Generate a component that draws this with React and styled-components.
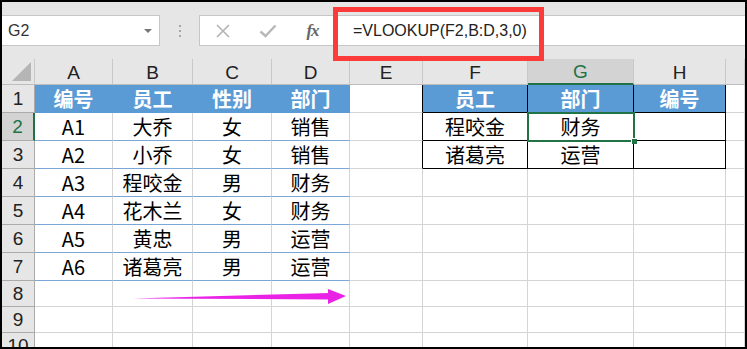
import React from "react";
import styled, { createGlobalStyle, css } from "styled-components";

const GlobalStyle = createGlobalStyle`
  html, body {
    margin: 0;
    padding: 0;
    background: #fff;
  }
`;

const GREEN = "#217346";
const BLUE = "#5b9bd5";
const GRID = "#d4d4d4";
const CJK = `"Noto Sans CJK SC", "Noto Sans", sans-serif`;
const LATIN = `"Liberation Sans", Arial, sans-serif`;

const Frame = styled.div`
  position: relative;
  width: 747px;
  height: 349px;
  box-sizing: border-box;
  border: 2px solid #000;
  background: #e6e6e6;
  overflow: hidden;
  display: flex;
  flex-direction: column;
`;

const Toolbar = styled.div`
  height: 57px;
  flex: none;
  display: flex;
  align-items: center;
`;

const NameBox = styled.div`
  width: 158px;
  height: 31px;
  box-sizing: border-box;
  background: #fff;
  border: 1px solid #c6c6c6;
  border-left: none;
  display: flex;
  align-items: center;
  justify-content: space-between;
  padding: 0 7px 0 6px;
  font: 16px ${LATIN};
  color: #333;
`;

const Caret = styled.span`
  width: 0;
  height: 0;
  border-left: 4px solid transparent;
  border-right: 4px solid transparent;
  border-top: 4px solid #777;
`;

const Grip = styled.div`
  width: 39px;
  display: flex;
  flex-direction: column;
  align-items: center;
  gap: 3px;

  span {
    width: 2px;
    height: 2px;
    background: #a6a6a6;
  }
`;

const FormulaBox = styled.div`
  flex: 1;
  height: 31px;
  box-sizing: border-box;
  background: #fff;
  border: 1px solid #c6c6c6;
  border-right: none;
  display: flex;
  align-items: center;
`;

const IconButton = styled.div`
  width: 45px;
  display: flex;
  justify-content: center;
  align-items: center;
  color: ${(p) => p.$color || "#b3b3b3"};
`;

const Fx = styled.span`
  font: italic bold 17px "Liberation Serif", "Times New Roman", serif;
  color: #666;
  letter-spacing: -1px;
`;

const Formula = styled.div`
  padding-left: 18px;
  font: 16px ${LATIN};
  color: #222;
`;

const RedMark = styled.div`
  position: absolute;
  left: 331px;
  top: 5px;
  width: 211px;
  height: 54px;
  box-sizing: border-box;
  border: 5px solid #fc3b3b;
  pointer-events: none;
`;

const Sheet = styled.div`
  flex: 1;
  display: grid;
  grid-template-columns: 33px 78px 80px 79px 78px 73px 105px 106px 92px 1fr;
  grid-template-rows: 26px repeat(7, 28px) 26px 26px 26px;
  background: #fff;
`;

const ColHead = styled.div`
  box-sizing: border-box;
  background: ${(p) => (p.$active ? "#d3d3d3" : "#e6e6e6")};
  color: ${(p) => (p.$active ? GREEN : "#222")};
  border-right: 1px solid #c9c9c9;
  border-bottom: ${(p) => (p.$active ? `2px solid ${GREEN}` : "1px solid #bdbdbd")};
  display: flex;
  align-items: center;
  justify-content: center;
  font: 19px ${LATIN};
  padding-top: 2px;
`;

const Corner = styled(ColHead)`
  position: relative;

  &::after {
    content: "";
    position: absolute;
    right: 3px;
    bottom: 3px;
    width: 0;
    height: 0;
    border-left: 19px solid transparent;
    border-bottom: 19px solid #b5b5b5;
  }
`;

const RowHead = styled.div`
  box-sizing: border-box;
  background: ${(p) => (p.$active ? "#d3d3d3" : "#e6e6e6")};
  color: ${(p) => (p.$active ? GREEN : "#222")};
  border-right: ${(p) => (p.$active ? `2px solid ${GREEN}` : "1px solid #ababab")};
  border-bottom: 1px solid #ababab;
  display: flex;
  align-items: center;
  justify-content: center;
  font: 19px ${LATIN};
  padding-top: 1px;
`;

const Cell = styled.div`
  position: relative;
  box-sizing: border-box;
  display: flex;
  align-items: center;
  justify-content: center;
  font: 20px/1 ${CJK};
  color: #000;
  background: #fff;
  border-right: 1px solid ${GRID};
  border-bottom: 1px solid ${GRID};
  white-space: nowrap;

  ${(p) =>
    p.$fill &&
    css`
      background: ${BLUE};
      color: #fff;
      font-weight: 700;
      border-right-color: ${BLUE};
      border-bottom-color: ${BLUE};
    `}

  ${(p) =>
    p.$band &&
    css`
      border-bottom-color: #7aa6d8;
    `}

  ${(p) =>
    p.$boxed &&
    css`
      border-right-color: #000;
      border-bottom-color: #000;
    `}

  ${(p) =>
    p.$edge &&
    css`
      border-right-color: #000;
    `}

  ${(p) =>
    p.$selected &&
    css`
      z-index: 2;

      &::before {
        content: "";
        position: absolute;
        left: -1px;
        top: -1px;
        right: -2px;
        bottom: -2px;
        border: 2px solid ${GREEN};
      }

      &::after {
        content: "";
        position: absolute;
        right: -4px;
        bottom: -4px;
        width: 6px;
        height: 6px;
        background: ${GREEN};
        border-top: 1px solid #fff;
        border-left: 1px solid #fff;
        box-sizing: border-box;
      }
    `}
`;

const Overlay = styled.svg`
  position: absolute;
  left: -2px;
  top: -2px;
  pointer-events: none;
`;

const columns = ["A", "B", "C", "D", "E", "F", "G", "H", ""];

const source = [
  ["编号", "员工", "性别", "部门"],
  ["A1", "大乔", "女", "销售"],
  ["A2", "小乔", "女", "销售"],
  ["A3", "程咬金", "男", "财务"],
  ["A4", "花木兰", "女", "财务"],
  ["A5", "黄忠", "男", "运营"],
  ["A6", "诸葛亮", "男", "运营"],
];

const lookup = [
  ["员工", "部门", "编号"],
  ["程咬金", "财务", ""],
  ["诸葛亮", "运营", ""],
];

function cellsForRow(r) {
  const out = [];
  for (let c = 0; c < 9; c++) {
    const props = {};
    let text = "";
    if (r <= 7 && c < 4) {
      text = source[r - 1][c];
      if (r === 1) props.$fill = true;
      else props.$band = true;
    } else if (r <= 3 && c >= 5 && c <= 7) {
      text = lookup[r - 1][c - 5];
      props.$boxed = true;
      if (r === 1) {
        props.$fill = true;
        props.$boxed = true;
      }
      if (r === 2 && c === 6) props.$selected = true;
    } else if (r <= 3 && c === 4) {
      props.$edge = true;
    }
    out.push({ text, props });
  }
  return out;
}

function CrossIcon() {
  return (
    <svg width="16" height="14" viewBox="0 0 16 14">
      <path d="M2 1 L14 13 M14 1 L2 13" stroke="currentColor" strokeWidth="1.6" fill="none" />
    </svg>
  );
}

function CheckIcon() {
  return (
    <svg width="18" height="14" viewBox="0 0 18 14">
      <path d="M1.5 7.5 L6.5 12 L16.5 1.5" stroke="currentColor" strokeWidth="2.4" fill="none" />
    </svg>
  );
}

export default function App() {
  const rows = Array.from({ length: 10 }, (_, i) => i + 1);

  return (
    <>
      <GlobalStyle />
      <Frame>
        <Toolbar>
          <NameBox>
            <span>G2</span>
            <Caret />
          </NameBox>
          <Grip>
            <span />
            <span />
            <span />
          </Grip>
          <FormulaBox>
            <IconButton>
              <CrossIcon />
            </IconButton>
            <IconButton $color="#b8b8b8">
              <CheckIcon />
            </IconButton>
            <IconButton>
              <Fx>fx</Fx>
            </IconButton>
            <Formula>=VLOOKUP(F2,B:D,3,0)</Formula>
          </FormulaBox>
        </Toolbar>

        <Sheet>
          <Corner />
          {columns.map((name, i) => (
            <ColHead key={i} $active={name === "G"}>
              {name}
            </ColHead>
          ))}
          {rows.map((r) => (
            <React.Fragment key={r}>
              <RowHead $active={r === 2}>{r}</RowHead>
              {cellsForRow(r).map((cell, c) => (
                <Cell key={c} {...cell.props}>
                  {cell.text}
                </Cell>
              ))}
            </React.Fragment>
          ))}
        </Sheet>

        <RedMark />
        <Overlay width="747" height="349" viewBox="0 0 747 349">
          <polygon points="133,298.5 330,293 330,299.5" fill="#ea22e6" />
          <polygon points="328,289 346,296 328,304" fill="#ea22e6" />
        </Overlay>
      </Frame>
    </>
  );
}
